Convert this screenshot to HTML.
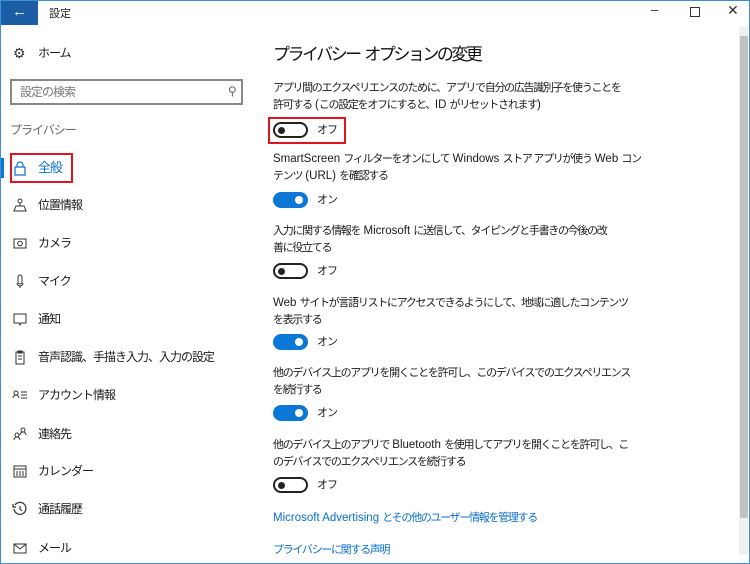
<!DOCTYPE html>
<html><head><meta charset="utf-8"><style>
*{margin:0;padding:0;box-sizing:border-box}
body{width:750px;height:564px;overflow:hidden;background:#fff;font-family:"Liberation Sans","Noto Sans CJK JP",sans-serif;color:#1a1a1a;position:relative}
.frame{position:absolute;left:0;top:0;width:750px;height:564px;border:1px solid #3d8fd6}
.a{position:absolute;white-space:nowrap}
.t{font-size:11px;line-height:17px;letter-spacing:-1.3px}
.t b,.link b{font-weight:normal;font-size:11.5px;letter-spacing:0}
.side{font-size:12px;line-height:16px;letter-spacing:-1px}
.ic{position:absolute;left:12px;width:16px;height:16px}
.tog{position:absolute;left:273px;width:35px;height:16px;border-radius:8px}
.off{border:2px solid #222;background:#fff}
.off::after{content:"";position:absolute;left:3px;top:3px;width:7px;height:7px;border-radius:50%;background:#222}
.on{background:#0b78d7}
.on::after{content:"";position:absolute;right:5px;top:4px;width:8px;height:8px;border-radius:50%;background:#fff}
.lbl{position:absolute;left:317px;font-size:11px;line-height:16px;letter-spacing:-1px}
.link{color:#0b6ec9;font-size:11px;letter-spacing:-1.3px}
</style></head><body>
<div class="frame"></div>
<div class="a" style="left:1px;top:1px;width:37px;height:24px;background:#1b5ea6;color:#fff;font-size:15px;text-align:center;line-height:22px">←</div>
<div class="a" style="left:49px;top:5px;font-size:11px">設定</div>
<div class="a" style="left:651px;top:2px;font-size:13px;color:#333">–</div>
<div class="a" style="left:690px;top:7px;width:10px;height:10px;border:1px solid #333"></div>
<div class="a" style="left:727px;top:2px;font-size:14px;color:#333">✕</div>
<div class="a" style="left:739px;top:27px;width:9px;height:528px;background:#f0f0f0"></div>
<div class="a" style="left:740px;top:36px;width:8px;height:482px;background:#c2c2c2"></div>
<div class="a" style="left:13px;top:45px;font-size:14px;color:#333">⚙</div>
<div class="a side" style="left:38px;top:45px">ホーム</div>
<div class="a" style="left:10px;top:79px;width:233px;height:26px;border:2px solid #888"></div>
<div class="a side" style="left:20px;top:84px;color:#777">設定の検索</div>
<div class="a" style="left:228px;top:84px;font-size:12px;color:#666">⚲</div>
<div class="a side" style="left:10px;top:122px;color:#666">プライバシー</div>
<div class="a" style="left:1px;top:158px;width:3px;height:20px;background:#0b78d7"></div>
<div class="a" style="left:10px;top:153px;width:63px;height:30px;border:2px solid #e0141e"></div>
<svg class="ic" style="top:160px" viewBox="0 0 16 16"><rect x="3" y="7" width="10" height="8" fill="none" stroke="#0b6ec9" stroke-width="1.2"/><path d="M5 7V5a3 3 0 0 1 6 0v2" fill="none" stroke="#0b6ec9" stroke-width="1.2"/></svg>
<div class="a side" style="left:38px;top:160px;color:#0b6ec9;font-size:13px">全般</div>
<svg class="ic" style="top:197px" viewBox="0 0 16 16"><circle cx="8" cy="4" r="2" fill="none" stroke="#333"/><path d="M8 6v3M2 14h12l-2-5H4z" fill="none" stroke="#333"/></svg>
<div class="a side" style="left:38px;top:197px">位置情報</div>
<svg class="ic" style="top:235px" viewBox="0 0 16 16"><rect x="2" y="4" width="12" height="9" fill="none" stroke="#333"/><circle cx="8" cy="8.5" r="2.3" fill="none" stroke="#333"/></svg>
<div class="a side" style="left:38px;top:235px">カメラ</div>
<svg class="ic" style="top:273px" viewBox="0 0 16 16"><rect x="6" y="2" width="4" height="9" rx="2" fill="none" stroke="#333"/><path d="M5 10a3 3 0 0 0 6 0M8 13v2" fill="none" stroke="#333"/></svg>
<div class="a side" style="left:38px;top:273px">マイク</div>
<svg class="ic" style="top:311px" viewBox="0 0 16 16"><path d="M2 3h12v9H9l-1 2-1-2H2z" fill="none" stroke="#333"/></svg>
<div class="a side" style="left:38px;top:311px">通知</div>
<svg class="ic" style="top:349px" viewBox="0 0 16 16"><rect x="4" y="3" width="8" height="12" fill="none" stroke="#333"/><path d="M6 2h4v2H6zM6 7h4M6 10h4" fill="none" stroke="#333"/></svg>
<div class="a side" style="left:38px;top:349px">音声認識、手描き入力、入力の設定</div>
<svg class="ic" style="top:387px" viewBox="0 0 16 16"><circle cx="4" cy="6" r="2" fill="none" stroke="#333"/><path d="M1 11a3 3 0 0 1 6 0M9 5h6M9 8h6M9 11h6" fill="none" stroke="#333"/></svg>
<div class="a side" style="left:38px;top:387px">アカウント情報</div>
<svg class="ic" style="top:426px" viewBox="0 0 16 16"><circle cx="5" cy="9" r="2" fill="none" stroke="#333"/><circle cx="11" cy="4" r="2" fill="none" stroke="#333"/><path d="M2 14a3 3 0 0 1 6 0M8 9a3 3 0 0 1 6 0" fill="none" stroke="#333"/></svg>
<div class="a side" style="left:38px;top:426px">連絡先</div>
<svg class="ic" style="top:463px" viewBox="0 0 16 16"><rect x="2" y="3" width="12" height="11" fill="none" stroke="#333"/><path d="M2 6h12M5 8v5M8 8v5M11 8v5" fill="none" stroke="#333"/></svg>
<div class="a side" style="left:38px;top:463px">カレンダー</div>
<svg class="ic" style="top:501px" viewBox="0 0 16 16"><path d="M3 4a6 6 0 1 1-1 4M1 3v3h3M8 5v3l2 2" fill="none" stroke="#333" stroke-width="1.2"/></svg>
<div class="a side" style="left:38px;top:501px">通話履歴</div>
<svg class="ic" style="top:540px" viewBox="0 0 16 16"><rect x="2" y="4" width="12" height="9" fill="none" stroke="#333"/><path d="M2 4l6 5 6-5" fill="none" stroke="#333"/></svg>
<div class="a side" style="left:38px;top:540px">メール</div>
<div class="a" style="left:273px;top:43px;font-size:17px;line-height:24px;letter-spacing:-2.5px;color:#111">プライバシー<span style="letter-spacing:0"> </span>オプションの変更</div>
<div class="a t" style="left:273px;top:80px">アプリ間のエクスペリエンスのために、アプリで自分の広告識別子を使うことを<br>許可する<b> (</b>この設定をオフにすると、<b>ID </b>がリセットされます<b>)</b></div>
<div class="a" style="left:268px;top:117px;width:78px;height:27px;border:2px solid #e0141e"></div>
<div class="tog off" style="top:122px"></div><div class="lbl" style="top:122px">オフ</div>
<div class="a t" style="left:273px;top:151px"><b>SmartScreen </b>フィルターをオンにして<b> Windows </b>ストア アプリが使う<b> Web </b>コン<br>テンツ<b> (URL) </b>を確認する</div>
<div class="tog on" style="top:192px"></div><div class="lbl" style="top:192px">オン</div>
<div class="a t" style="left:273px;top:223px">入力に関する情報を<b> Microsoft </b>に送信して、タイピングと手書きの今後の改<br>善に役立てる</div>
<div class="tog off" style="top:263px"></div><div class="lbl" style="top:263px">オフ</div>
<div class="a t" style="left:273px;top:295px"><b>Web </b>サイトが言語リストにアクセスできるようにして、地域に適したコンテンツ<br>を表示する</div>
<div class="tog on" style="top:334px"></div><div class="lbl" style="top:334px">オン</div>
<div class="a t" style="left:273px;top:365px">他のデバイス上のアプリを開くことを許可し、このデバイスでのエクスペリエンス<br>を続行する</div>
<div class="tog on" style="top:405px"></div><div class="lbl" style="top:405px">オン</div>
<div class="a t" style="left:273px;top:437px">他のデバイス上のアプリで<b> Bluetooth </b>を使用してアプリを開くことを許可し、こ<br>のデバイスでのエクスペリエンスを続行する</div>
<div class="tog off" style="top:477px"></div><div class="lbl" style="top:477px">オフ</div>
<div class="a link" style="left:273px;top:509px"><b>Microsoft Advertising </b>とその他のユーザー情報を管理する</div>
<div class="a link" style="left:273px;top:541px">プライバシーに関する声明</div>
</body></html>
